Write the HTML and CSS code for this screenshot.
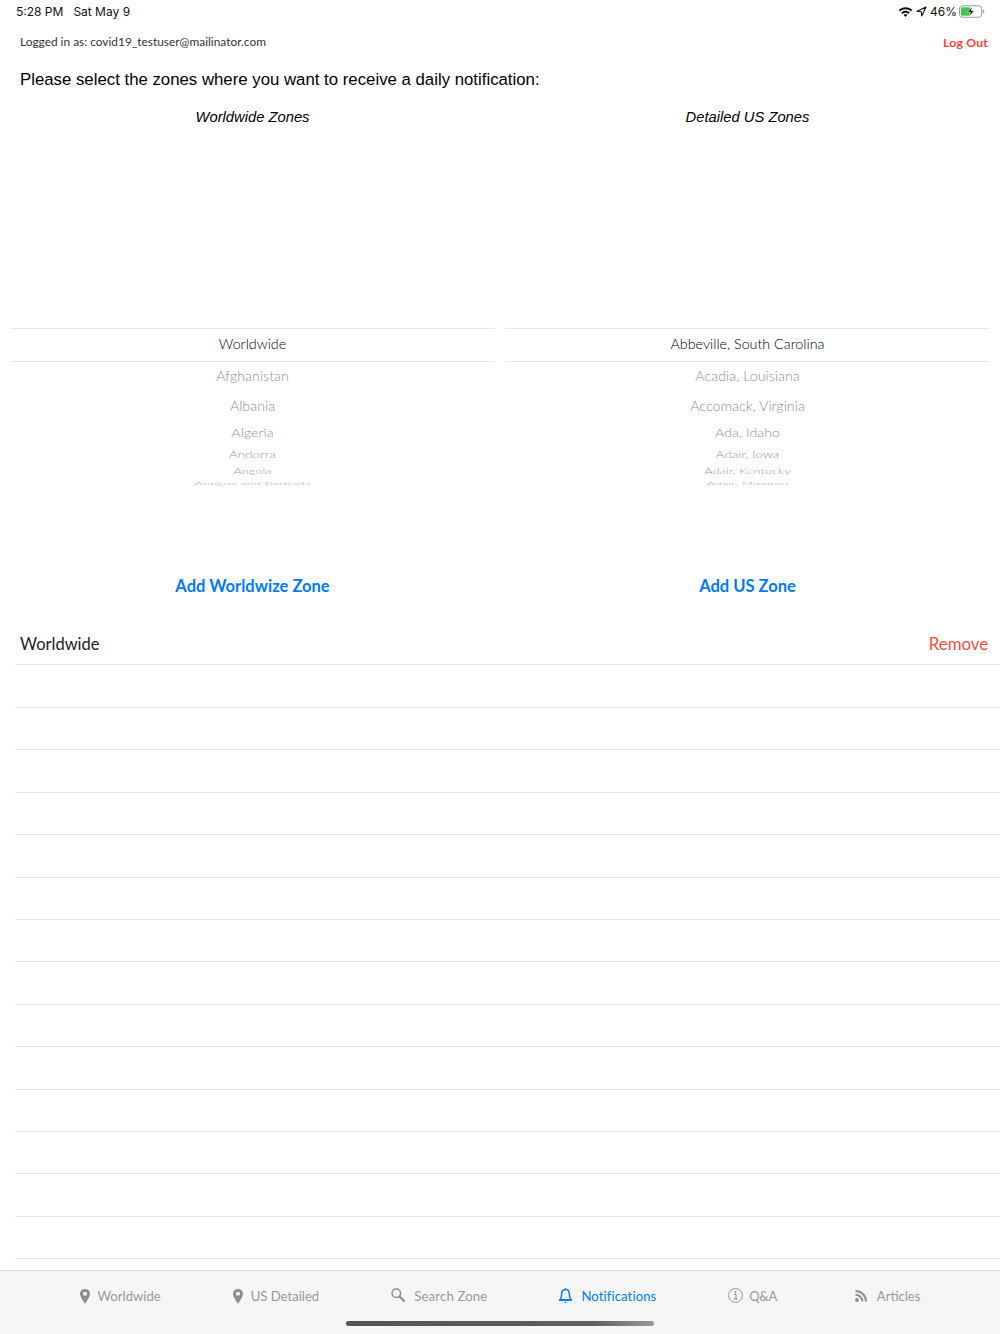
FILE: index.html
```html
<!DOCTYPE html>
<html lang="en">
<head>
<meta charset="utf-8">
<title>Notifications</title>
<link rel="stylesheet" href="styles.css">
</head>
<body>
<div class="page">
  <header class="status">
    <div class="status-left"><span>5:28 PM</span><span>Sat May 9</span></div>
    <div class="status-right">
      <svg class="wifi" width="15" height="12" viewBox="0 0 16 12"><path d="M8 1C5.2 1 2.7 2.1.8 3.9l1.4 1.5C3.7 3.9 5.8 3 8 3s4.3.9 5.8 2.4l1.4-1.5C13.3 2.1 10.8 1 8 1z" fill="#111"/><path d="M8 4.6c-1.7 0-3.3.7-4.5 1.9l1.4 1.5C5.7 7.200 6.800 6.700 8 6.700s2.300.5 3.100 1.300l1.400-1.500C11.300 5.300 9.700 4.600 8 4.600z" fill="#111"/><path d="M8 8.200c-.8 0-1.500.3-2 .9L8 11.200l2-2.100c-.5-.6-1.200-.9-2-.9z" fill="#111"/></svg>
      <svg class="loc" width="11" height="11" viewBox="0 0 11 11"><path d="M10 1 1 5.200l4.300.5.500 4.300z" fill="none" stroke="#111" stroke-width="1.100" stroke-linejoin="round"/></svg>
      <span class="pct">46%</span>
      <svg class="batt" width="26" height="13" viewBox="0 0 27 13"><rect x=".5" y=".5" width="23" height="12" rx="3" fill="#fff" stroke="#9a9a9a"/><rect x="2" y="2" width="10" height="9" rx="1.500" fill="#3fc94f"/><path d="M24.800 4.500c1 .3 1.500 1 1.500 2s-.5 1.700-1.500 2z" fill="#9a9a9a"/><path d="M13.800 1.500 8.800 7.200h3l-1 4.300 5-5.900h-3z" fill="#111" stroke="#fff" stroke-width=".6"/></svg>
    </div>
  </header>

  <div class="account">
    <span class="account-email">Logged in as: covid19_testuser@mailinator.com</span>
    <a class="logout">Log Out</a>
  </div>

  <h1 class="prompt">Please select the zones where you want to receive a daily notification:</h1>

  <section class="pickers">
    <div class="picker-col">
      <h2 class="picker-title">Worldwide Zones</h2>
      <div class="wheel">
        <div class="wheel-selected">Worldwide</div>
        <div class="wheel-item i1">Afghanistan</div>
        <div class="wheel-item i2">Albania</div>
        <div class="wheel-item i3">Algeria</div>
        <div class="wheel-item i4">Andorra</div>
        <div class="wheel-item i5">Angola</div>
        <div class="wheel-item i6">Antigua and Barbuda</div>
      </div>
      <a class="add-zone">Add Worldwize Zone</a>
    </div>
    <div class="picker-col">
      <h2 class="picker-title">Detailed US Zones</h2>
      <div class="wheel">
        <div class="wheel-selected">Abbeville, South Carolina</div>
        <div class="wheel-item i1">Acadia, Louisiana</div>
        <div class="wheel-item i2">Accomack, Virginia</div>
        <div class="wheel-item i3">Ada, Idaho</div>
        <div class="wheel-item i4">Adair, Iowa</div>
        <div class="wheel-item i5">Adair, Kentucky</div>
        <div class="wheel-item i6">Adair, Missouri</div>
      </div>
      <a class="add-zone">Add US Zone</a>
    </div>
  </section>

  <section class="zone-list">
    <div class="zone-row zone-row-first"><span class="zone-name">Worldwide</span><a class="zone-remove">Remove</a></div>
    <div class="zone-row"></div><div class="zone-row"></div><div class="zone-row"></div>
    <div class="zone-row"></div><div class="zone-row"></div><div class="zone-row"></div>
    <div class="zone-row"></div><div class="zone-row"></div><div class="zone-row"></div>
    <div class="zone-row"></div><div class="zone-row"></div><div class="zone-row"></div>
    <div class="zone-row"></div><div class="zone-row"></div>
  </section>

  <nav class="tabbar">
    <div class="tabs">
      <a class="tab">
        <svg class="tab-icon" width="10" height="15" viewBox="0 0 10 16" preserveAspectRatio="none"><path fill-rule="evenodd" d="M5 0a5 5 0 0 0-5 5c0 3.200 3.300 7.700 5 11 1.700-3.300 5-7.800 5-11a5 5 0 0 0-5-5zm0 3a2.100 2.100 0 1 1 0 4.200A2.100 2.100 0 0 1 5 3z" fill="#8e8e8e"/></svg>
        <span>Worldwide</span>
      </a>
      <a class="tab">
        <svg class="tab-icon" width="10" height="15" viewBox="0 0 10 16" preserveAspectRatio="none"><path fill-rule="evenodd" d="M5 0a5 5 0 0 0-5 5c0 3.200 3.300 7.700 5 11 1.700-3.300 5-7.800 5-11a5 5 0 0 0-5-5zm0 3a2.100 2.100 0 1 1 0 4.200A2.100 2.100 0 0 1 5 3z" fill="#8e8e8e"/></svg>
        <span>US Detailed</span>
      </a>
      <a class="tab tab-search">
        <svg class="tab-icon tab-icon-up" width="14" height="14" viewBox="0 0 14 14"><circle cx="5.300" cy="5.300" r="4.300" fill="none" stroke="#8e8e8e" stroke-width="1.500"/><path d="M8.500 8.500 13 13" stroke="#8e8e8e" stroke-width="2" stroke-linecap="round"/></svg>
        <span>Search Zone</span>
      </a>
      <a class="tab tab-active">
        <svg class="tab-icon" width="13" height="16" viewBox="0 0 13 16"><path d="M6.500 1.500c-2.400 0-3.800 1.800-3.800 4.200 0 3.100-.7 4.700-1.700 6h11c-1-1.300-1.700-2.900-1.700-6 0-2.400-1.400-4.200-3.800-4.200z" fill="none" stroke="#007aff" stroke-width="1.500" stroke-linejoin="round"/><path d="M.6 12.300h11.800" stroke="#007aff" stroke-width="1.500" stroke-linecap="round"/><path d="M5 14a1.600 1.600 0 0 0 3 0z" fill="#007aff"/><circle cx="6.500" cy="1.200" r="1" fill="#007aff"/></svg>
        <span>Notifications</span>
      </a>
      <a class="tab tab-narrow">
        <svg class="tab-icon tab-icon-up" width="15" height="15" viewBox="0 0 15 15"><circle cx="7.500" cy="7.500" r="6.900" fill="none" stroke="#8e8e8e" stroke-width=".9"/><path d="M6 6.300h2v4.700M5.800 11.100h3.600" fill="none" stroke="#8e8e8e" stroke-width="1"/><circle cx="7.500" cy="4" r="1" fill="#8e8e8e"/></svg>
        <span>Q&amp;A</span>
      </a>
      <a class="tab tab-rss">
        <svg class="tab-icon" width="12" height="12" viewBox="0 0 12 12"><circle cx="2" cy="10" r="1.900" fill="#8e8e8e"/><path d="M.5 4.700a6.800 6.800 0 0 1 6.800 6.800" fill="none" stroke="#8e8e8e" stroke-width="2"/><path d="M.5 1a10.500 10.500 0 0 1 10.500 10.500" fill="none" stroke="#8e8e8e" stroke-width="2"/></svg>
        <span>Articles</span>
      </a>
    </div>
    <div class="home-indicator"></div>
  </nav>
</div>
</body>
</html>
```
FILE: styles.css
```css
* { box-sizing: border-box; }
html, body { margin: 0; padding: 0; background: #fff; }
body { font-family: "Liberation Sans", Arial, sans-serif; color: #000; }
a { display: block; }
.page { width: 1000px; height: 1334px; display: flex; flex-direction: column; overflow: hidden; }

.status { height: 23px; padding: 0 15px 0 16px; display: flex; justify-content: space-between; align-items: center; font-family: Inter, sans-serif; font-size: 12px; color: #111; }
.status-left { display: flex; gap: 10px; }
.status-right { display: flex; align-items: center; gap: 3px; }
.pct { margin-right: -1px; }

.account { height: 45px; padding: 0 12px 0 20px; display: flex; justify-content: space-between; font-family: Lato, sans-serif; color: #333; }
.account-email { padding-top: 11px; font-size: 11.900px; }
.logout { padding-top: 12px; color: #ff3b30; font-weight: 700; font-size: 12.200px; letter-spacing: .2px; }

.prompt { margin: 0; height: 33px; padding: 0 20px; font-size: 16.800px; font-weight: 400; line-height: 24px; }

.pickers { display: flex; gap: 10px; padding: 0 10px; }
.picker-col { width: 485px; display: flex; flex-direction: column; align-items: stretch; }
.picker-title { margin: 0; height: 227px; padding-top: 6px; text-align: center; font-size: 14.750px; line-height: 20px; font-style: italic; font-weight: 400; }
.wheel { height: 158px; overflow: hidden; font-family: Lato, sans-serif; font-weight: 300; text-align: center; border-top: 1px solid #e6e6e6; }
.wheel-selected { height: 33px; line-height: 30px; border-bottom: 1px solid #e6e6e6; font-size: 14.300px; color: #000; }
.wheel-item { white-space: nowrap; font-size: 14.300px; }
.i1 { height: 29px; line-height: 28px; color: #8f8f8f; }
.i2 { height: 30px; line-height: 30px; color: #8f8f8f; transform: scaleY(.95); }
.i3 { height: 24px; line-height: 24px; color: #939393; transform: scaleY(.82); }
.i4 { height: 20px; line-height: 20px; color: #999; transform: scale(.94, .66); }
.i5 { height: 14px; line-height: 14px; color: #a2a2a2; transform: scale(.9, .48); }
.i6 { height: 9px; line-height: 9px; color: #aeaeae; transform: scale(.9, .3); }
.add-zone { margin-top: 85px; height: 30px; line-height: 30px; text-align: center; color: #007aff; font-family: Lato, sans-serif; font-weight: 700; font-size: 16.500px; }

.zone-list { margin-top: 22px; padding-left: 15px; }
.zone-row { height: 42.430px; border-bottom: 1px solid #e6e6e6; display: flex; align-items: center; justify-content: space-between; padding: 0 12px 0 5px; }
.zone-name { font-family: Lato, sans-serif; font-size: 16.500px; color: #222; }
.zone-remove { font-family: Lato, sans-serif; font-size: 16.800px; color: #ff4a40; }

.tabbar { margin-top: auto; height: 64px; background: #f6f6f6; border-top: 1px solid #dcdcdc; display: flex; flex-direction: column; align-items: center; }
.tabs { height: 50px; display: flex; justify-content: center; align-items: center; gap: 72px; }
.tab { display: flex; align-items: center; gap: 8px; font-family: Lato, sans-serif; font-size: 13.100px; color: #999; }
.tab-search { gap: 9px; letter-spacing: .2px; }
.tab-active { gap: 9px; letter-spacing: .1px; color: #007aff; }
.tab-narrow { gap: 6px; letter-spacing: -.5px; }
.tab-rss { margin-left: 6px; gap: 10px; }
.tab-icon-up { margin-top: -2px; }
.home-indicator { width: 308px; height: 5px; border-radius: 3px; background: linear-gradient(90deg, #555, #5f5f5f 80%, #999); }
```
